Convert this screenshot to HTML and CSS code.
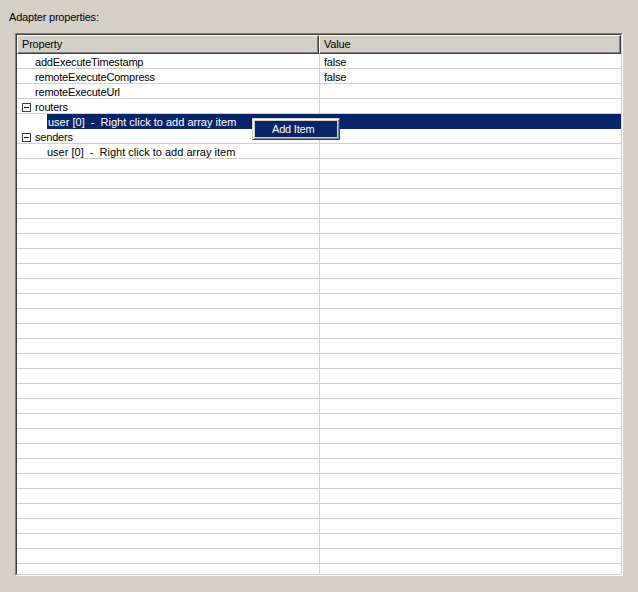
FILE: index.html
```html
<!DOCTYPE html>
<html>
<head>
<meta charset="utf-8">
<link rel="stylesheet" href="styles.css">
</head>
<body>
<div class="label">Adapter properties:</div>
<div class="frame">
  <div class="frame-inner">
    <div class="header">
      <div class="hcell hprop">Property</div>
      <div class="hcell hval">Value</div>
    </div>
    <div class="rows">
      <div class="row"><div class="prop"><span class="indent1"></span><span class="txt">addExecuteTimestamp</span></div><div class="val">false</div></div>
      <div class="row"><div class="prop"><span class="indent1"></span><span class="txt">remoteExecuteCompress</span></div><div class="val">false</div></div>
      <div class="row"><div class="prop"><span class="indent1"></span><span class="txt">remoteExecuteUrl</span></div><div class="val"></div></div>
      <div class="row"><div class="prop"><span class="toggle"><span class="box"><span class="minus"></span></span></span><span class="txt">routers</span></div><div class="val"></div></div>
      <div class="row selected"><div class="prop"><span class="indent2"></span><span class="txt item sel">user [0]&nbsp; -&nbsp; Right click to add array item</span></div><div class="val sel"></div></div>
      <div class="row"><div class="prop"><span class="toggle"><span class="box"><span class="minus"></span></span></span><span class="txt">senders</span></div><div class="val"></div></div>
      <div class="row"><div class="prop"><span class="indent2"></span><span class="txt item">user [0]&nbsp; -&nbsp; Right click to add array item</span></div><div class="val"></div></div>
      <div class="row"><div class="prop"></div><div class="val"></div></div>
      <div class="row"><div class="prop"></div><div class="val"></div></div>
      <div class="row"><div class="prop"></div><div class="val"></div></div>
      <div class="row"><div class="prop"></div><div class="val"></div></div>
      <div class="row"><div class="prop"></div><div class="val"></div></div>
      <div class="row"><div class="prop"></div><div class="val"></div></div>
      <div class="row"><div class="prop"></div><div class="val"></div></div>
      <div class="row"><div class="prop"></div><div class="val"></div></div>
      <div class="row"><div class="prop"></div><div class="val"></div></div>
      <div class="row"><div class="prop"></div><div class="val"></div></div>
      <div class="row"><div class="prop"></div><div class="val"></div></div>
      <div class="row"><div class="prop"></div><div class="val"></div></div>
      <div class="row"><div class="prop"></div><div class="val"></div></div>
      <div class="row"><div class="prop"></div><div class="val"></div></div>
      <div class="row"><div class="prop"></div><div class="val"></div></div>
      <div class="row"><div class="prop"></div><div class="val"></div></div>
      <div class="row"><div class="prop"></div><div class="val"></div></div>
      <div class="row"><div class="prop"></div><div class="val"></div></div>
      <div class="row"><div class="prop"></div><div class="val"></div></div>
      <div class="row"><div class="prop"></div><div class="val"></div></div>
      <div class="row"><div class="prop"></div><div class="val"></div></div>
      <div class="row"><div class="prop"></div><div class="val"></div></div>
      <div class="row"><div class="prop"></div><div class="val"></div></div>
      <div class="row"><div class="prop"></div><div class="val"></div></div>
      <div class="row"><div class="prop"></div><div class="val"></div></div>
      <div class="row"><div class="prop"></div><div class="val"></div></div>
      <div class="row"><div class="prop"></div><div class="val"></div></div>
      <div class="row"><div class="prop"></div><div class="val"></div></div>
      <div class="row"><div class="prop"></div><div class="val"></div></div>
      <div class="row"><div class="prop"></div><div class="val"></div></div>
    </div>
  </div>
</div>
<div class="menu">
  <div class="menu-item">Add Item</div>
</div>
</body>
</html>
```

FILE: styles.css
```css
html, body {
  margin: 0;
  padding: 0;
}
body {
  background: #d4d0c8;
  font-family: "Liberation Sans", Arial, sans-serif;
  font-size: 11px;
  letter-spacing: -0.2px;
  color: #000;
  width: 638px;
  height: 592px;
  position: relative;
  overflow: hidden;
}
.label {
  padding: 11px 0 0 9px;
  height: 13px;
  line-height: 13px;
}
.frame {
  margin: 9px 0 0 15px;
  width: 608px;
  height: 543px;
  box-sizing: border-box;
  border-style: solid;
  border-width: 1px;
  border-color: #808080 #ffffff #ffffff #808080;
}
.frame-inner {
  height: 100%;
  box-sizing: border-box;
  border-style: solid;
  border-width: 1px;
  border-color: #404040 #d4d0c8 #d4d0c8 #404040;
  background: #fff;
  overflow: hidden;
}
.header {
  display: grid;
  grid-template-columns: 302px 302px;
  height: 19px;
}
.hcell {
  box-sizing: border-box;
  background: #d4d0c8;
  border-style: solid;
  border-width: 1px;
  border-color: #ffffff #404040 #404040 #ffffff;
  box-shadow: inset -1px -1px 0 #808080;
  padding-left: 4px;
  line-height: 16px;
}
.row {
  display: grid;
  grid-template-columns: 303px 301px;
  height: 15px;
  box-sizing: border-box;
  border-bottom: 1px solid #d4d0c8;
}
.row.selected {
  border-bottom-color: transparent;
}
.prop {
  display: flex;
  border-right: 1px solid #d4d0c8;
  height: 15px;
}
.selected .prop {
  border-right: none;
}
.val {
  padding-left: 4px;
  height: 15px;
}
.txt, .val {
  padding-top: 1px;
  box-sizing: border-box;
  line-height: 14px;
}
.indent1 {
  width: 18px;
  flex: none;
}
.indent2 {
  width: 30px;
  flex: none;
}
.txt {
  white-space: nowrap;
}
.txt.item {
  letter-spacing: 0;
}
.txt.sel {
  flex: 1;
  padding-left: 1px;
  background: #0a246a;
  color: #fff;
}
.val.sel {
  background: #0a246a;
}
.toggle {
  width: 18px;
  flex: none;
  display: flex;
  align-items: center;
  padding-left: 5px;
  box-sizing: border-box;
}
.box {
  width: 9px;
  height: 9px;
  box-sizing: border-box;
  border: 1px solid #404040;
  position: relative;
  margin-top: 1px;
}
.minus {
  position: absolute;
  left: 1px;
  top: 3px;
  width: 5px;
  height: 1px;
  background: #000;
}
.menu {
  position: absolute;
  left: 252px;
  top: 118px;
  width: 88px;
  height: 22px;
  box-sizing: border-box;
  border-style: solid;
  border-width: 1px;
  border-color: #d4d0c8 #404040 #404040 #d4d0c8;
  box-shadow: inset 1px 1px 0 #ffffff, inset -1px -1px 0 #808080;
  background: #d4d0c8;
  padding: 2px;
}
.menu-item {
  background: #0a246a;
  color: #fff;
  height: 16px;
  line-height: 16px;
  padding-left: 17px;
}
```
